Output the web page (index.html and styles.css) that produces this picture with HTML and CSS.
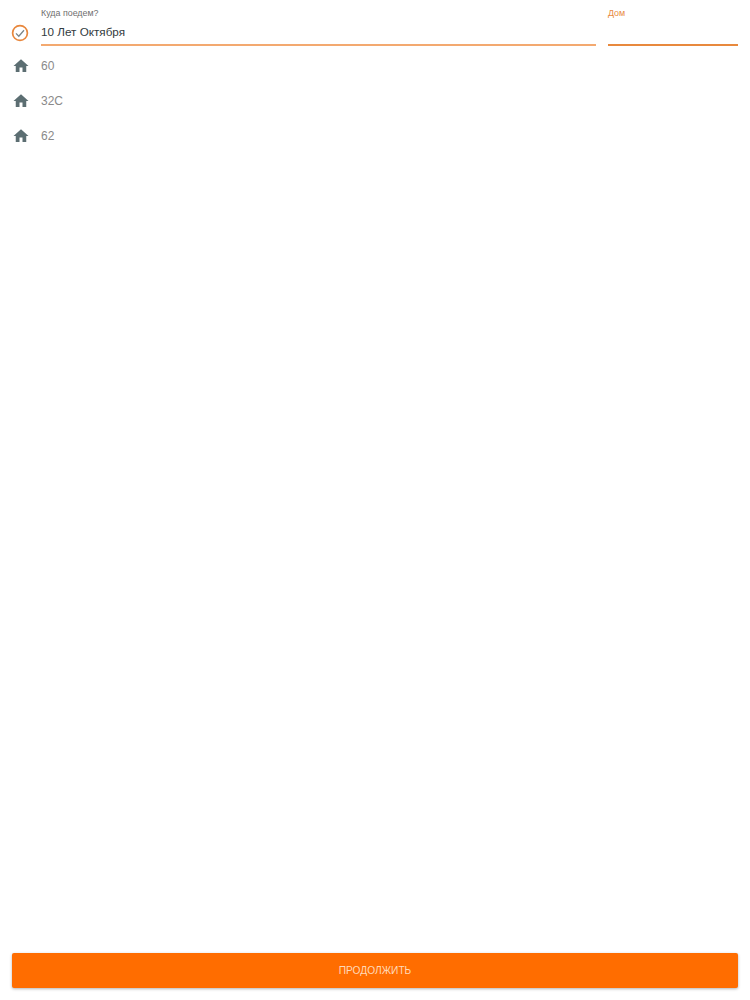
FILE: index.html
```html
<!doctype html>
<html>
<head>
<meta charset="utf-8">
<title>Куда поедем?</title>
<link rel="stylesheet" href="styles.css">
</head>

<body>
<div class="page">
	<div class="search">
		<svg class="check-icon" viewBox="0 0 18 18" width="18" height="18">
			<circle cx="9" cy="9" r="7.4" fill="none" stroke="#e8873c" stroke-width="1.7"/>
			<path d="M5 9.4l2.8 2.8 5.2-6" fill="none" stroke="#7b8588" stroke-width="1.3"/>
		</svg>
		<div class="field street">
			<label>Куда поедем?</label>
			<div class="value">10 Лет Октября</div>
		</div>
		<div class="field house">
			<label>Дом</label>
			<div class="value"></div>
		</div>
	</div>
	<ul class="list">
		<li>
			<svg class="home-icon" viewBox="0 0 24 24" width="18" height="18"><path d="M10 20v-6h4v6h5v-8h3L12 3 2 12h3v8z"/></svg>
			<span>60</span>
		</li>
		<li>
			<svg class="home-icon" viewBox="0 0 24 24" width="18" height="18"><path d="M10 20v-6h4v6h5v-8h3L12 3 2 12h3v8z"/></svg>
			<span>32С</span>
		</li>
		<li>
			<svg class="home-icon" viewBox="0 0 24 24" width="18" height="18"><path d="M10 20v-6h4v6h5v-8h3L12 3 2 12h3v8z"/></svg>
			<span>62</span>
		</li>
	</ul>
	<button class="next-btn">ПРОДОЛЖИТЬ</button>
</div>
</body>
</html>
```

FILE: styles.css
```css
body,ul,li,button{ margin:0; padding:0;}
li{ list-style:none;}
body{ background:#fff; font-family:"Liberation Sans",sans-serif;}

.page{ height:1000px; box-sizing:border-box; padding:0 12px 12px 12px; display:flex; flex-direction:column;}

.search{ display:flex; align-items:flex-end; height:46px;}
.check-icon{ margin:0 12px 4px -1px; flex:none;}
.field{ height:46px; box-sizing:border-box; padding-top:8px;}
.field label{ display:block; font-size:8.9px; line-height:10px; color:#6f6f6f;}
.street{ flex:1; border-bottom:2px solid #f3a970; margin-right:12px;}
.street .value{ margin-top:3px; font-size:11.7px; line-height:21px; color:#333b40;}
.house{ width:130px; flex:none; border-bottom:2px solid #e8893d;}
.house label{ color:#e8893d;}

.list{ flex:1;}
.list li{ display:flex; align-items:center; height:35px;}
.list li:first-child{ margin-top:2px;}
.home-icon{ fill:#5c6e72; margin-right:11px; flex:none;}
.list span{ font-size:12px; color:#8a8a8a;}

.next-btn{ height:35px; border:none; border-radius:2px; background:#ff6d00; color:#ffd9b8; font-family:inherit; font-size:10.2px; box-shadow:0 1px 3px rgba(0,0,0,0.3);}
```
